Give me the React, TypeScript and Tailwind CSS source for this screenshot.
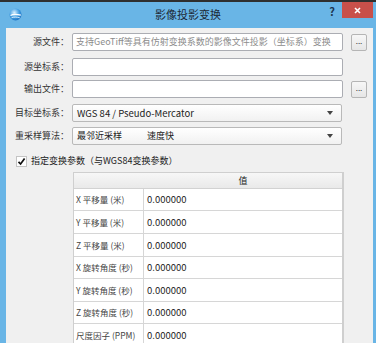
import type { ReactNode } from 'react';

const rows = [
  { name: 'X 平移量 (米)', h: 'h-[22px]' },
  { name: 'Y 平移量 (米)', h: 'h-[23px]' },
  { name: 'Z 平移量 (米)', h: 'h-[23px]' },
  { name: 'X 旋转角度 (秒)', h: 'h-[22px]' },
  { name: 'Y 旋转角度 (秒)', h: 'h-[23px]' },
  { name: 'Z 旋转角度 (秒)', h: 'h-[22px]' },
  { name: '尺度因子 (PPM)', h: 'h-[23px]' },
];

export default function App() {
  return (
    <div className="h-[343px] w-[376px] overflow-hidden bg-[#2f2f2f] pt-[2px] font-['Noto_Sans_CJK_SC','Noto_Sans',sans-serif]">
      <div className="flex h-full flex-col bg-[#69b5e6]">
        {/* Title bar */}
        <div className="grid h-[26px] shrink-0 grid-cols-[1fr_auto_1fr] items-start">
          <div className="pl-[9px] pt-[6px]">
            <AppIcon />
          </div>
          <div className="pt-[5px] text-[11px] leading-[14px] text-[#1d2a36]">影像投影变换</div>
          <div className="flex justify-end">
            <span className="mr-[7px] pt-[2px] text-[11px] font-bold leading-[14px] text-[#1c3550]">?</span>
            <button className="mr-[3px] flex h-[16px] w-[31px] items-center justify-center bg-[#c9504a]">
              <svg width="7" height="7" viewBox="0 0 7 7">
                <path d="M1 1L6 6M6 1L1 6" stroke="#fff" strokeWidth="1.6" />
              </svg>
            </button>
          </div>
        </div>

        {/* Client area */}
        <div className="ml-[6px] mr-[3px] flex flex-1 flex-col bg-[#f0f0f0] text-[9px] text-[#333]">
          <Field label="源文件：" cls="mt-[5px]">
            <TextBox placeholder="支持GeoTiff等具有仿射变换系数的影像文件投影（坐标系）变换" />
            <MoreButton />
          </Field>
          <Field label="源坐标系：" cls="mt-[7px]">
            <TextBox />
          </Field>
          <Field label="输出文件：" cls="mt-[4px]">
            <TextBox />
            <MoreButton />
          </Field>
          <Field label="目标坐标系：" cls="mt-[6px]">
            <Combo>
              <span className="text-[9.5px] text-[#222]">WGS 84 / Pseudo-Mercator</span>
            </Combo>
          </Field>
          <Field label="重采样算法：" cls="mt-[5px]">
            <Combo>
              <span className="text-[#222]">最邻近采样</span>
              <span className="ml-[25px] text-[#222]">速度快</span>
            </Combo>
          </Field>

          <label className="mt-[9px] flex h-[14px] items-center pl-[10px]">
            <span className="flex h-[11px] w-[11px] items-center justify-center border border-[#c4c4c4] bg-white">
              <svg width="9" height="9" viewBox="0 0 9 9">
                <path d="M1.5 4.8L3.6 7L7.6 1.4" fill="none" stroke="#111" strokeWidth="1.7" />
              </svg>
            </span>
            <span className="ml-[4px] text-[#222]">指定变换参数（与WGS84变换参数）</span>
          </label>

          {/* Parameter table */}
          <div className="ml-[67px] mt-[4px] w-[271px] border-l border-r-2 border-t border-[#cfcfcf] bg-white">
            <div className="grid h-[16px] grid-cols-[70px_1fr] border-b border-[#d2d2d2] bg-gradient-to-b from-[#f7f7f7] to-[#e9e9e9]">
              <div />
              <div className="text-center leading-[15px] text-[#222]">值</div>
            </div>
            {rows.map((r) => (
              <div key={r.name} className={`grid grid-cols-[70px_1fr] border-b border-[#d6d6d6] ${r.h}`}>
                <div className="flex items-center border-r border-[#d6d6d6] pl-[2px] text-[8.5px] text-[#444]">
                  {r.name}
                </div>
                <div className="flex items-center pl-[3px] text-[9.5px] text-[#222]">0.000000</div>
              </div>
            ))}
          </div>
        </div>
      </div>
    </div>
  );
}

function Field({ label, cls, children }: { label: string; cls: string; children: ReactNode }) {
  return (
    <div className={`flex h-[18px] items-center ${cls}`}>
      <div className="w-[63px] shrink-0 text-right text-[#333]">{label}</div>
      <div className="ml-[3px] flex items-center">{children}</div>
    </div>
  );
}

function TextBox({ placeholder }: { placeholder?: string }) {
  return (
    <div className="flex h-[18px] w-[271px] items-center rounded-[2px] border border-[#abadb3] bg-white px-[3px] text-[#8c8c8c]">
      {placeholder}
    </div>
  );
}

function MoreButton() {
  return (
    <button className="ml-[8px] flex h-[17px] w-[16px] items-center justify-center rounded-[2px] border border-[#b5b5b5] bg-gradient-to-b from-[#f7f7f7] to-[#e6e6e6] pb-[3px] text-[8px] leading-none text-[#333]">
      ...
    </button>
  );
}

function Combo({ children }: { children: ReactNode }) {
  return (
    <div className="flex h-[18px] w-[270px] items-center rounded-[2px] border border-[#b9b9b9] bg-gradient-to-b from-white to-[#f1f1f1] pl-[4px] pr-[8px]">
      <div className="flex flex-1 items-center">{children}</div>
      <svg width="6" height="4" viewBox="0 0 6 4">
        <path d="M0 0H6L3 4Z" fill="#444" />
      </svg>
    </div>
  );
}

function AppIcon() {
  return (
    <svg width="13" height="13" viewBox="0 0 13 13">
      <defs>
        <radialGradient id="g" cx="0.4" cy="0.35" r="0.7">
          <stop offset="0" stopColor="#d8f0ff" />
          <stop offset="0.6" stopColor="#3f9be0" />
          <stop offset="1" stopColor="#1d6fc0" />
        </radialGradient>
      </defs>
      <circle cx="6.5" cy="6.5" r="6" fill="url(#g)" />
      <path d="M1.5 7.5C4 6 8 6.2 11.8 7.2" fill="none" stroke="#fff" strokeWidth="1.2" />
      <path d="M2.5 9.8C5 8.8 8 9 10.8 9.8" fill="none" stroke="#fff" strokeWidth="0.9" opacity="0.8" />
    </svg>
  );
}
